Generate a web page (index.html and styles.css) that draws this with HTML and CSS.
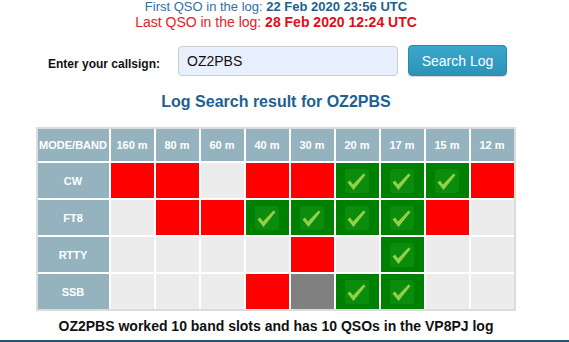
FILE: index.html
```html
<!DOCTYPE html>
<html>
<head>
<meta charset="utf-8">
<link rel="stylesheet" href="styles.css">
</head>
<body>
<div class="page">
  <div class="first">First QSO in the log: <b>22 Feb 2020 23:56 UTC</b></div>
  <div class="last">Last QSO in the log: <b>28 Feb 2020 12:24 UTC</b></div>
  <form class="search">
    <label class="lbl">Enter your callsign:</label>
    <input class="call" type="text" value="OZ2PBS">
    <button class="btn" type="button">Search Log</button>
  </form>
  <h2 class="title">Log Search result for OZ2PBS</h2>
  <div class="tablewrap">
    <div class="grid">
      <div class="hd">MODE/BAND</div><div class="hd">160 m</div><div class="hd">80 m</div><div class="hd">60 m</div><div class="hd">40 m</div><div class="hd">30 m</div><div class="hd">20 m</div><div class="hd">17 m</div><div class="hd">15 m</div><div class="hd">12 m</div>

      <div class="md">CW</div>
      <div class="c red"></div><div class="c red"></div><div class="c"></div><div class="c red"></div><div class="c red"></div>
      <div class="c ok"><svg viewBox="0 0 24 24"><rect x="0" y="0" width="24" height="24" rx="3" class="bx"/><path d="M2.5 13.5 L5 11.5 L8 15.5 L18.5 4.5 L20.5 6 L8.5 21 Z" class="ck"/></svg></div>
      <div class="c ok"><svg viewBox="0 0 24 24"><rect x="0" y="0" width="24" height="24" rx="3" class="bx"/><path d="M2.5 13.5 L5 11.5 L8 15.5 L18.5 4.5 L20.5 6 L8.5 21 Z" class="ck"/></svg></div>
      <div class="c ok"><svg viewBox="0 0 24 24"><rect x="0" y="0" width="24" height="24" rx="3" class="bx"/><path d="M2.5 13.5 L5 11.5 L8 15.5 L18.5 4.5 L20.5 6 L8.5 21 Z" class="ck"/></svg></div>
      <div class="c red"></div>

      <div class="md">FT8</div>
      <div class="c"></div><div class="c red"></div><div class="c red"></div>
      <div class="c ok"><svg viewBox="0 0 24 24"><rect x="0" y="0" width="24" height="24" rx="3" class="bx"/><path d="M2.5 13.5 L5 11.5 L8 15.5 L18.5 4.5 L20.5 6 L8.5 21 Z" class="ck"/></svg></div>
      <div class="c ok"><svg viewBox="0 0 24 24"><rect x="0" y="0" width="24" height="24" rx="3" class="bx"/><path d="M2.5 13.5 L5 11.5 L8 15.5 L18.5 4.5 L20.5 6 L8.5 21 Z" class="ck"/></svg></div>
      <div class="c ok"><svg viewBox="0 0 24 24"><rect x="0" y="0" width="24" height="24" rx="3" class="bx"/><path d="M2.5 13.5 L5 11.5 L8 15.5 L18.5 4.5 L20.5 6 L8.5 21 Z" class="ck"/></svg></div>
      <div class="c ok"><svg viewBox="0 0 24 24"><rect x="0" y="0" width="24" height="24" rx="3" class="bx"/><path d="M2.5 13.5 L5 11.5 L8 15.5 L18.5 4.5 L20.5 6 L8.5 21 Z" class="ck"/></svg></div>
      <div class="c red"></div><div class="c"></div>

      <div class="md">RTTY</div>
      <div class="c"></div><div class="c"></div><div class="c"></div><div class="c"></div><div class="c red"></div><div class="c"></div>
      <div class="c ok"><svg viewBox="0 0 24 24"><rect x="0" y="0" width="24" height="24" rx="3" class="bx"/><path d="M2.5 13.5 L5 11.5 L8 15.5 L18.5 4.5 L20.5 6 L8.5 21 Z" class="ck"/></svg></div>
      <div class="c"></div><div class="c"></div>

      <div class="md">SSB</div>
      <div class="c"></div><div class="c"></div><div class="c"></div><div class="c red"></div><div class="c gray"></div>
      <div class="c ok"><svg viewBox="0 0 24 24"><rect x="0" y="0" width="24" height="24" rx="3" class="bx"/><path d="M2.5 13.5 L5 11.5 L8 15.5 L18.5 4.5 L20.5 6 L8.5 21 Z" class="ck"/></svg></div>
      <div class="c ok"><svg viewBox="0 0 24 24"><rect x="0" y="0" width="24" height="24" rx="3" class="bx"/><path d="M2.5 13.5 L5 11.5 L8 15.5 L18.5 4.5 L20.5 6 L8.5 21 Z" class="ck"/></svg></div>
      <div class="c"></div><div class="c"></div>
    </div>
  </div>
  <p class="summary">OZ2PBS worked 10 band slots and has 10 QSOs in the VP8PJ log</p>
</div>
<div class="bottomline"></div>
</body>
</html>
```
FILE: styles.css
```css
html, body {
  margin: 0;
  padding: 0;
  background: #fff;
  font-family: "Liberation Sans", Arial, sans-serif;
  overflow: hidden;
}
.page {
  width: 552px;
  height: 340px;
  text-align: center;
}
.first {
  font-size: 13px;
  line-height: 14px;
  color: #33709f;
  padding-top: 0;
}
.first b { color: #235f8c; }
.last {
  font-size: 14px;
  line-height: 16px;
  color: #e4202a;
}
.last b { color: #e10d17; }
.search {
  display: flex;
  justify-content: center;
  align-items: center;
  margin: 15px 0 0 0;
  height: 31px;
}
.lbl {
  font-size: 12px;
  font-weight: bold;
  color: #111;
  margin-right: 18px;
  margin-top: 7px;
  margin-left: 3px;
}
.call {
  box-sizing: border-box;
  width: 220px;
  height: 30px;
  border: 1px solid #c9ccd3;
  border-radius: 4px;
  background: #e8f0fe;
  font-family: "Liberation Sans", Arial, sans-serif;
  font-size: 14px;
  color: #111;
  padding: 0 8px;
  margin: 0 10px 0 0;
  outline: none;
}
.btn {
  box-sizing: border-box;
  width: 99px;
  height: 31px;
  border: 1px solid #2a88a8;
  border-radius: 4px;
  background: linear-gradient(#3ba6cb, #2b93b8);
  color: #fff;
  font-family: "Liberation Sans", Arial, sans-serif;
  font-size: 14px;
  padding: 0;
  margin: 0;
  box-shadow: 0 1px 1px rgba(0,0,0,0.15);
}
.title {
  font-size: 16px;
  line-height: 18px;
  color: #1e6190;
  margin: 17px 0 0 0;
  font-weight: bold;
}
.tablewrap {
  display: flex;
  justify-content: center;
  margin-top: 16px;
  margin-left: -1px;
}
.grid {
  display: grid;
  grid-template-columns: 71px repeat(9, 43px);
  grid-template-rows: 32px repeat(4, 35px);
  gap: 2px;
  background: #fff;
  border: 2px solid #dcdcdc;
  width: max-content;
}
.hd, .md {
  background: #95b3bf;
  color: #fff;
  font-weight: bold;
  font-size: 11px;
  display: flex;
  align-items: center;
  justify-content: center;
}
.c {
  background: #ececec;
  display: flex;
  align-items: center;
  justify-content: center;
}
.c.red { background: #ff0000; }
.c.gray { background: #808080; }
.c.ok { background: #008000; }
.c svg { width: 24px; height: 24px; display: block; }
.bx { fill: #0c8c0c; }
.ck {
  fill: #93d04a;
  stroke: none;
}
.summary {
  margin: 7px 0 0 0;
  font-size: 14px;
  font-weight: bold;
  color: #111;
  line-height: 17px;
}
.bottomline {
  position: absolute;
  left: 0;
  top: 340px;
  width: 569px;
  height: 2px;
  background: #2d4f6e;
}
```
